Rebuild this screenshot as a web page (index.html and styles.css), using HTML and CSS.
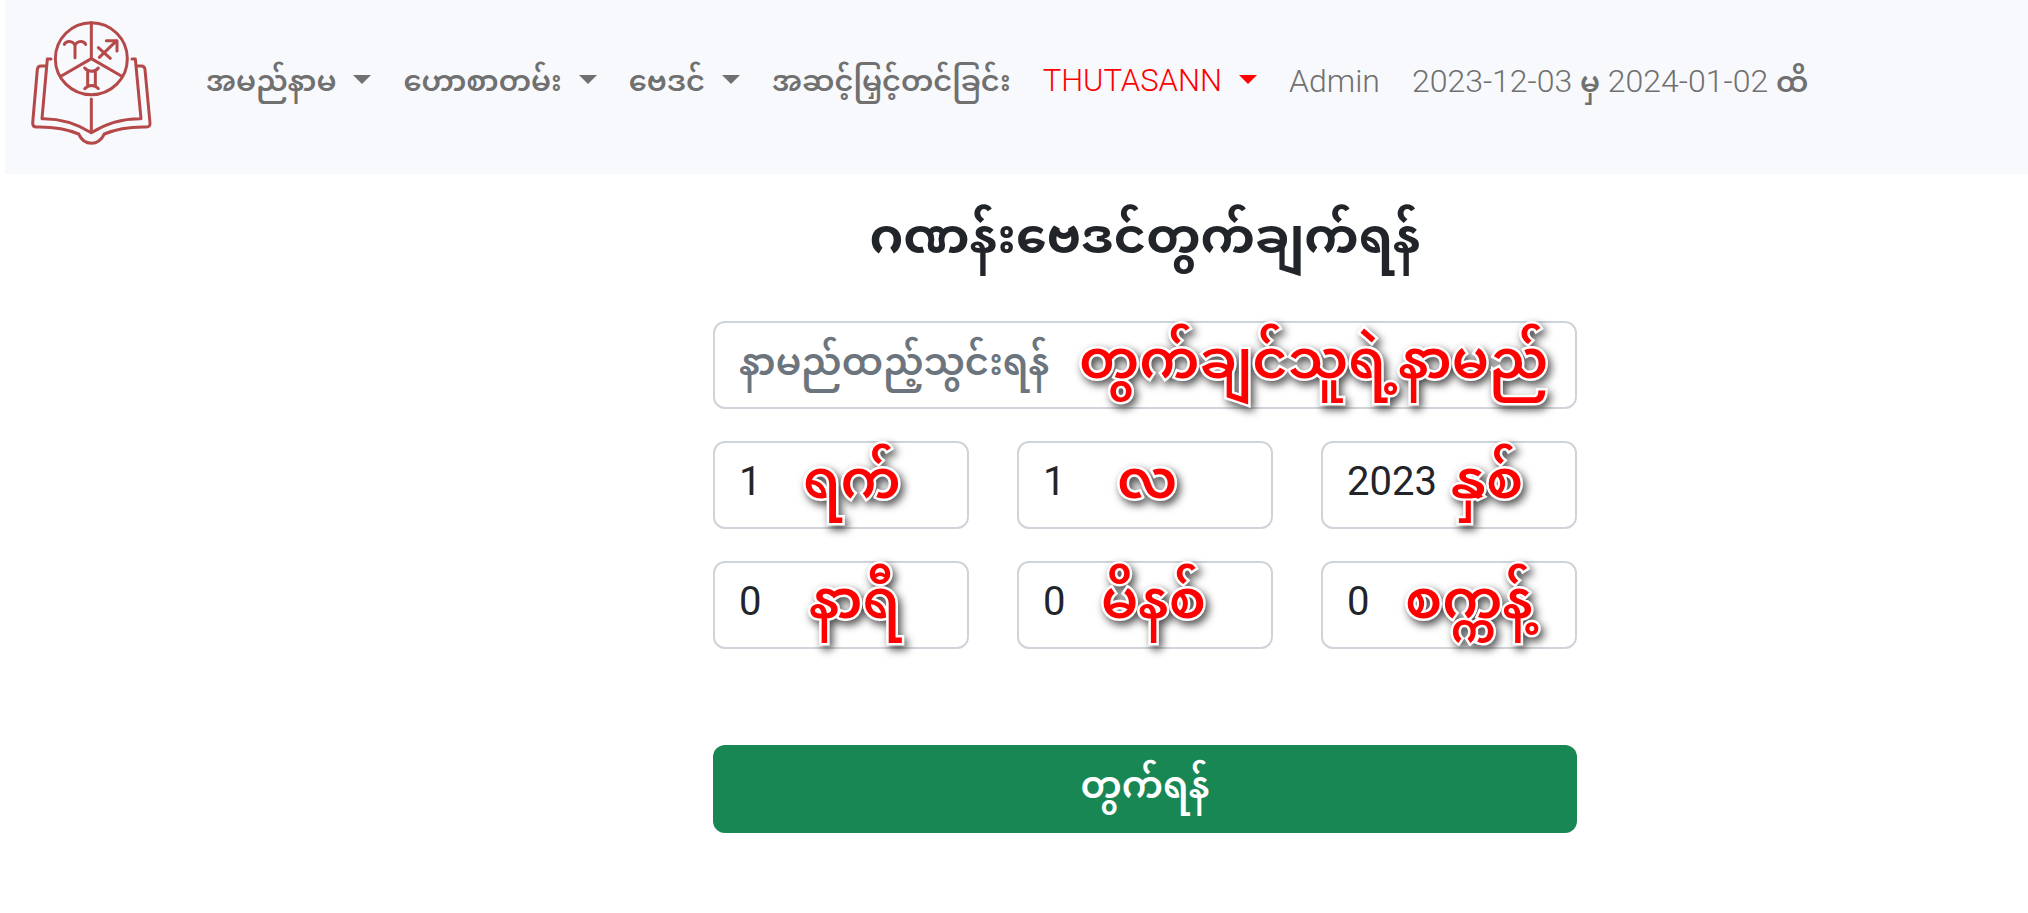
FILE: index.html
```html
<!DOCTYPE html>
<html lang="my">
<head>
    <meta charset="utf-8">
    <meta name="viewport" content="width=device-width, initial-scale=1">
    <title>THUTASANN</title>
    <link rel="stylesheet" href="styles.css">
</head>
<body>
    <nav class="navbar">
        <a class="navbar-brand" href="#" aria-label="THUTASANN">
            <svg class="logo" viewBox="90 55 375 390" fill="none" stroke="#b5494a" stroke-width="9" stroke-linecap="round" stroke-linejoin="round">
                <circle cx="277" cy="177" r="108"/>
                <path d="M277 69V177L187 229M277 177L367 229"/>
                <path d="M196 134C201 123 222 121 228 138V174M228 138C234 121 255 123 260 134"/>
                <path d="M301 173L353 123M322 123H354V154M298 144L334 176"/>
                <path d="M257 205C268 218 288 218 298 205M257 267C268 254 288 254 298 267M266 213V258M289 213V258"/>
                <path d="M156 178H145L129 357C185 356 232 371 277 399C322 371 369 356 426 357L409 178H399"/>
                <path d="M277 298V397"/>
                <path d="M141 199H126Q116 199 115 210L101 370Q101 382 112 382C160 381 204 388 239 403C256 440 298 440 316 403C351 388 395 381 442 382Q454 382 453 370L438 210Q437 199 427 199H414"/>
            </svg>
        </a>
        <ul class="navbar-nav">
            <li><a class="nav-link mm dropdown" href="#">အမည်နာမ</a></li>
            <li><a class="nav-link mm dropdown" href="#">ဟောစာတမ်း</a></li>
            <li><a class="nav-link mm dropdown" href="#">ဗေဒင်</a></li>
            <li><a class="nav-link mm" href="#">အဆင့်မြှင့်တင်ခြင်း</a></li>
            <li><a class="nav-link dropdown user" href="#">THUTASANN</a></li>
            <li><a class="nav-link" href="#">Admin</a></li>
            <li><a class="nav-link" href="#">2023-12-03 <span class="mm">မှ</span> 2024-01-02 <span class="mm">ထိ</span></a></li>
        </ul>
    </nav>

    <main class="content">
        <form class="calc-form">
            <h1>ဂဏန်းဗေဒင်တွက်ချက်ရန်</h1>
            <div class="field full">
                <input type="text" id="name" placeholder="နာမည်ထည့်သွင်းရန်">
                <label class="note note-name" for="name">တွက်ချင်သူရဲ့နာမည်</label>
            </div>
            <div class="field">
                <input type="text" id="day" value="1">
                <label class="note note-day" for="day">ရက်</label>
            </div>
            <div class="field">
                <input type="text" id="month" value="1">
                <label class="note note-month" for="month">လ</label>
            </div>
            <div class="field">
                <input type="text" id="year" value="2023">
                <label class="note note-year" for="year">နှစ်</label>
            </div>
            <div class="field">
                <input type="text" id="hour" value="0">
                <label class="note note-hour" for="hour">နာရီ</label>
            </div>
            <div class="field">
                <input type="text" id="minute" value="0">
                <label class="note note-minute" for="minute">မိနစ်</label>
            </div>
            <div class="field">
                <input type="text" id="second" value="0">
                <label class="note note-second" for="second">စက္ကန့်</label>
            </div>
            <button class="btn full" type="submit">တွက်ရန်</button>
        </form>
    </main>
</body>
</html>
```
FILE: styles.css
```css
* {
    box-sizing: border-box;
}

body {
    margin: 0 0 0 5px;
    background-color: #fff;
    color: #212529;
    font-family: Roboto, "Noto Sans Myanmar", Padauk, "Noto Sans", sans-serif;
}

.navbar {
    display: flex;
    align-items: center;
    gap: 36px;
    height: 174px;
    padding: 0 24px 8px;
    background-color: #f8f9fc;
}

.logo {
    display: block;
    width: 125px;
    height: 130px;
}

.navbar-nav {
    display: flex;
    margin: 0;
    padding: 0;
    list-style: none;
}

.nav-link {
    display: block;
    padding: 0 16px 4px;
    color: #707070;
    font-size: 32px;
    font-weight: 300;
    line-height: 48px;
    text-decoration: none;
    white-space: nowrap;
}

.mm {
    font-size: 29px;
    font-weight: 600;
}

.user {
    color: #f00;
    font-size: 31px;
}

.dropdown::after {
    content: "";
    display: inline-block;
    margin-left: 17px;
    vertical-align: 7px;
    border-top: 9px solid;
    border-left: 9px solid transparent;
    border-right: 9px solid transparent;
}

.content {
    margin-left: 257px;
}

.calc-form {
    display: grid;
    grid-template-columns: repeat(3, 1fr);
    gap: 32px 48px;
    max-width: 864px;
    margin: 0 auto;
    padding: 19px 0 80px;
}

.full {
    grid-column: 1 / -1;
}

h1 {
    grid-column: 1 / -1;
    margin: 0 0 8px;
    font-size: 49px;
    font-weight: 700;
    line-height: 88px;
    text-align: center;
    white-space: nowrap;
}

.field {
    position: relative;
}

.field input {
    display: block;
    width: 100%;
    height: 88px;
    padding: 0 24px 8px;
    border: 2px solid #ced4da;
    border-radius: 12px;
    background-color: #fff;
    color: #212529;
    font-family: inherit;
    font-size: 40px;
}

.field input::placeholder {
    color: #6c757d;
    font-size: 37px;
    font-weight: 600;
    opacity: 1;
}

/* red captions sit over the inputs */
.note {
    position: absolute;
    top: 0;
    color: #f00;
    font-size: 54px;
    font-weight: 600;
    line-height: 78px;
    white-space: nowrap;
    -webkit-text-stroke: 5px #fff;
    paint-order: stroke fill;
    filter: drop-shadow(3px 4px 4px rgba(0, 0, 0, 0.7));
}

.note-name {
    left: 366px;
}

.note-day {
    left: 90px;
}

.note-month {
    left: 100px;
}

.note-year {
    left: 130px;
}

.note-hour {
    left: 96px;
}

.note-minute {
    left: 84px;
}

.note-second {
    left: 84px;
}

.btn {
    height: 88px;
    margin-top: 64px;
    padding: 0 24px;
    border: none;
    border-radius: 12px;
    background-color: #198754;
    color: #fff;
    font-family: inherit;
    font-size: 37px;
    font-weight: 600;
    cursor: pointer;
}
```
